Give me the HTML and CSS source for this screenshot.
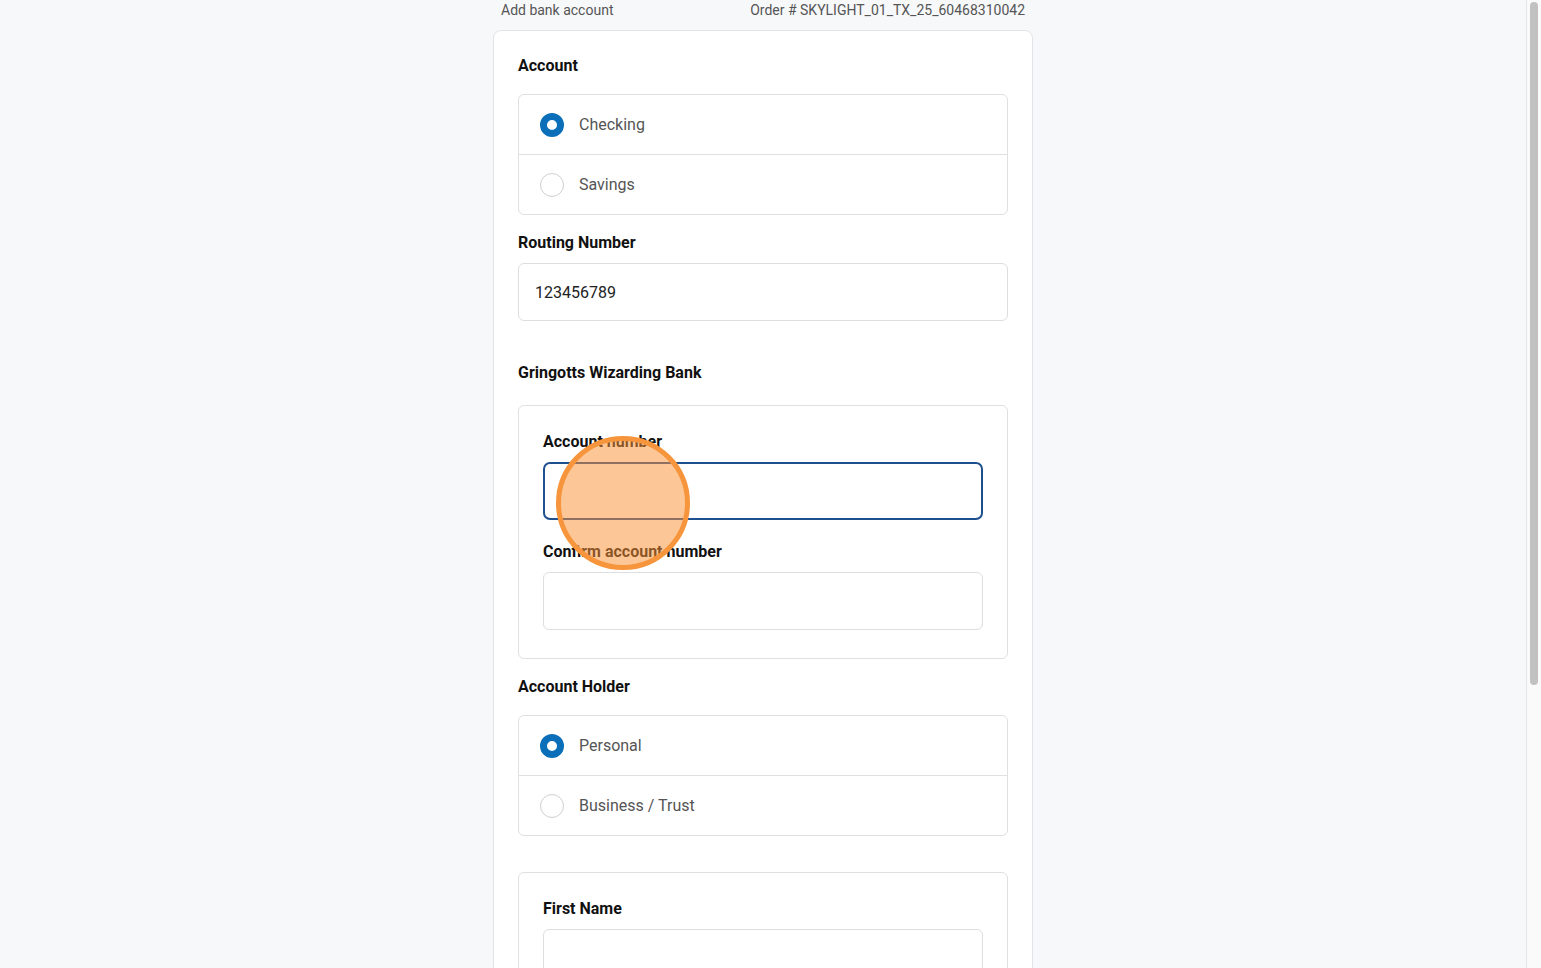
FILE: index.html
```html
<!DOCTYPE html>
<html lang="en">
<head>
<meta charset="utf-8">
<title>Add bank account</title>
<link rel="stylesheet" href="styles.css">
</head>
<body>
<div class="viewport">
  <div class="page">
    <header class="topbar">
      <span class="title">Add bank account</span>
      <span class="order">Order # SKYLIGHT_01_TX_25_60468310042</span>
    </header>
    <main class="card">
      <section class="section first">
        <h2 class="heading">Account</h2>
        <div class="radio-group">
          <label class="radio-row"><span class="radio checked"></span><span class="radio-label">Checking</span></label>
          <label class="radio-row"><span class="radio"></span><span class="radio-label">Savings</span></label>
        </div>
      </section>
      <section class="section">
        <h2 class="heading">Routing Number</h2>
        <div class="input"><span class="value">123456789</span></div>
      </section>
      <section class="section bank">
        <h2 class="heading">Gringotts Wizarding Bank</h2>
        <div class="box">
          <div class="field">
            <div class="label">Account number</div>
            <div class="input focused"></div>
          </div>
          <div class="field">
            <div class="label">Confirm account number</div>
            <div class="input"></div>
          </div>
        </div>
      </section>
      <section class="section">
        <h2 class="heading">Account Holder</h2>
        <div class="radio-group">
          <label class="radio-row"><span class="radio checked"></span><span class="radio-label">Personal</span></label>
          <label class="radio-row"><span class="radio"></span><span class="radio-label">Business / Trust</span></label>
        </div>
      </section>
      <section class="section names">
        <div class="box">
          <div class="field">
            <div class="label">First Name</div>
            <div class="input"></div>
          </div>
        </div>
      </section>
    </main>
    <div class="click-marker"></div>
  </div>
  <div class="scrollbar"><div class="thumb"></div></div>
</div>
</body>
</html>
```

FILE: styles.css
```css
* { box-sizing: border-box; }
html, body {
  margin: 0;
  padding: 0;
  height: 100%;
  overflow: hidden;
}
body {
  background: #f7f8fa;
  font-family: Roboto, "Liberation Sans", Arial, sans-serif;
  color: #111;
}
.viewport {
  display: flex;
  height: 100%;
}
.page {
  position: relative;
  flex: 1;
  display: flex;
  flex-direction: column;
  align-items: center;
  overflow: hidden;
}
.topbar {
  flex: none;
  width: 540px;
  height: 30px;
  padding: 0 8px;
  display: flex;
  justify-content: space-between;
  align-items: flex-start;
  font-size: 14px;
  line-height: 20px;
  color: #555;
}
.card {
  flex: none;
  width: 540px;
  background: #fff;
  border: 1px solid #e2e4e8;
  border-radius: 8px;
  padding: 24px 24px 40px;
}
.heading {
  margin: 0;
  padding-top: 1px;
  font-size: 16px;
  line-height: 20px;
  font-weight: 700;
  color: #111;
}
.section { margin-top: 17px; }
.section.first { margin-top: 0; }
.section.bank { margin-top: 41px; }
.section.names { margin-top: 36px; }
.section > .heading + .radio-group,
.section > .heading + .box { margin-top: 18px; }
.section.bank > .heading + .box { margin-top: 22px; }
.section > .heading + .input { margin-top: 10px; }
.radio-group {
  border: 1px solid #e0e0e0;
  border-radius: 6px;
  display: flex;
  flex-direction: column;
}
.radio-row {
  height: 59px;
  display: flex;
  align-items: center;
  padding-left: 21px;
  gap: 15px;
}
.radio-row + .radio-row { height: 60px; border-top: 1px solid #e0e0e0; }
.radio {
  width: 24px;
  height: 24px;
  border-radius: 50%;
  border: 1px solid #cfcfcf;
  background: #fff;
  flex: none;
}
.radio.checked {
  border: 7px solid #0a6fb8;
}
.radio-label {
  font-size: 16px;
  color: #555;
}
.input {
  height: 58px;
  border: 1px solid #dedede;
  border-radius: 6px;
  background: #fff;
  display: flex;
  align-items: center;
  padding-left: 16px;
}
.input.focused {
  border: 2px solid #1e4f8f;
  border-radius: 7px;
}
.value {
  font-size: 16px;
  color: #222;
}
.box {
  border: 1px solid #e0e0e0;
  border-radius: 6px;
  padding: 25px 24px 28px;
  display: flex;
  flex-direction: column;
  gap: 21px;
}
.label {
  padding-top: 1px;
  font-size: 16px;
  line-height: 20px;
  font-weight: 700;
  color: #111;
  margin-bottom: 10px;
}
.click-marker {
  position: absolute;
  left: 556px;
  top: 436px;
  width: 134px;
  height: 134px;
  border-radius: 50%;
  border: 5px solid #f7953d;
  background: rgba(249, 145, 55, 0.52);
}
.scrollbar {
  width: 15px;
  flex: none;
  background: #fafafa;
  border-left: 1px solid #e6e6e6;
  padding: 2px 3px 0 3px;
}
.thumb {
  width: 8px;
  height: 683px;
  border-radius: 4px;
  background: #c1c1c1;
}
```
